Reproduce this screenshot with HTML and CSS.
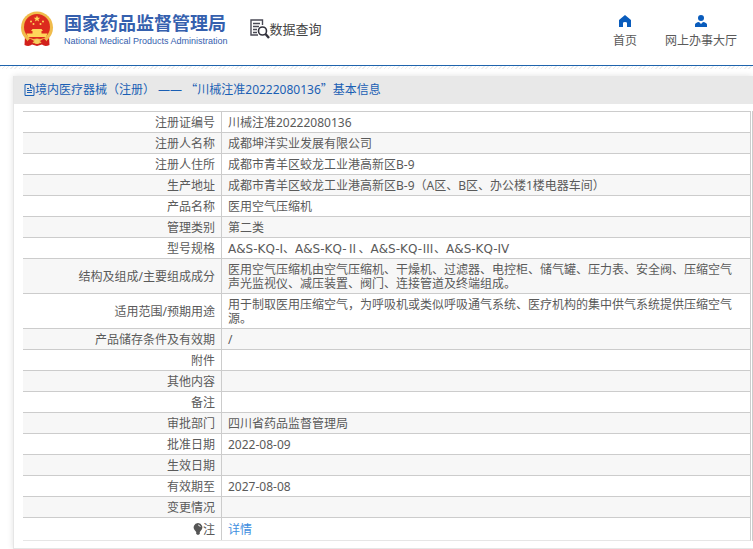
FILE: index.html
```html
<!DOCTYPE html>
<html lang="zh-CN">
<head>
    <meta charset="UTF-8">
    <meta name="viewport" content="width=device-width, initial-scale=1.0">
    <title>国家药品监督管理局 数据查询</title>
    <link rel="stylesheet" href="styles.css">
</head>
<body>
    <header class="header">
        <a class="brand" href="#">
            <svg class="emblem" viewBox="0 0 34 36" aria-hidden="true">
                <path d="M5 25L4.500 34Q9 36 12 33.500L17 35l5-1.500Q25 36 29.500 34L29 25Z" fill="#d2201c"/>
                <circle cx="17" cy="16.500" r="16" fill="#f0bc4c"/>
                <circle cx="17" cy="16" r="13" fill="#dc2a1e"/>
                <path d="M17 4.500l.9 2.200 2.400.1-1.900 1.500.7 2.300-2.100-1.300-2.100 1.300.7-2.300-1.900-1.500 2.400-.1z" fill="#ffd65a"/>
                <g fill="#ffd65a">
                    <circle cx="11" cy="10.500" r="1"/>
                    <circle cx="13.500" cy="13" r="1"/>
                    <circle cx="20.500" cy="13" r="1"/>
                    <circle cx="23" cy="10.500" r="1"/>
                    <path d="M12.500 18h9l1.500 2H11zM12.500 20h9v2.500h-9zM6.500 22.500h21L26 26H8z"/>
                </g>
                <path d="M4 25Q11 29 17 27.500 23 29 30 25l-4 6q-5 1.500-9 0-4 1.500-9 0Z" fill="#f0bc4c"/>
                <path d="M10 27.500l4 2.500-3 3.500-4-3zM24 27.500L20 30l3 3.500 4-3z" fill="#d2201c"/>
                <circle cx="17" cy="30.500" r="2.500" fill="#f6cf62"/>
            </svg>
            <span class="brand-text">
                <strong class="brand-name">国家药品监督管理局</strong>
                <span class="brand-en">National Medical Products Administration</span>
            </span>
        </a>
        <a class="search-link" href="#">
            <svg class="search-icon" viewBox="0 0 20 20" aria-hidden="true">
                <path d="M12.500 6V1H1v15h7M3 4.500h7M3 7.500h6M3 10.500h4M3 13.500h4" fill="none" stroke="#4a4a55" stroke-width="1.400"/>
                <circle cx="12.500" cy="12" r="4" fill="#fff" stroke="#33333d" stroke-width="1.600"/>
                <path d="M15.500 15l3.500 4" stroke="#33333d" stroke-width="2.400"/>
            </svg>
            数据查询
        </a>
        <nav class="nav">
            <a class="nav-item" href="#">
                <svg viewBox="0 0 12 12" aria-hidden="true">
                    <path d="M6 0L0 5v7h4V8q0-1 2-1t2 1v4h4V5z"/>
                </svg>
                首页
            </a>
            <a class="nav-item" href="#">
                <svg viewBox="0 0 12 12" aria-hidden="true">
                    <circle cx="6" cy="3" r="3"/>
                    <path d="M0 12V9.500Q.5 7.500 4 7l2 2 2-2q3.500.5 4 2.500V12z"/>
                </svg>
                网上办事大厅
            </a>
        </nav>
    </header>

    <main class="content">
        <div class="card">
            <h1 class="card-title">
                <svg class="doc-icon" viewBox="0 0 11 12" aria-hidden="true">
                    <path d="M1 .5h6l3 3v8H1zM6.500.5v3.500H10M3 6.500h5M3 8.500h5M3 4.500h2" fill="none" stroke="#1a5fb4"/>
                </svg>
                <span>境内医疗器械（注册） —— <span class="cjk">“</span>川械注准20222080136<span class="cjk">”</span>基本信息</span>
            </h1>
            <div class="table-wrap">
                <table class="info">
                    <tr><th scope="row">注册证编号</th><td>川械注准20222080136</td></tr>
                    <tr><th scope="row">注册人名称</th><td>成都坤洋实业发展有限公司</td></tr>
                    <tr><th scope="row">注册人住所</th><td>成都市青羊区蛟龙工业港高新区B-9</td></tr>
                    <tr><th scope="row">生产地址</th><td>成都市青羊区蛟龙工业港高新区B-9（A区、B区、办公楼1楼电器车间）</td></tr>
                    <tr><th scope="row">产品名称</th><td>医用空气压缩机</td></tr>
                    <tr><th scope="row">管理类别</th><td>第二类</td></tr>
                    <tr><th scope="row">型号规格</th><td class="models">A&amp;S-KQ-I、A&amp;S-KQ-<span class="cjk">Ⅱ</span>、A&amp;S-KQ-<span class="cjk">Ⅲ</span>、A&amp;S-KQ-IV</td></tr>
                    <tr><th scope="row">结构及组成/主要组成成分</th><td>医用空气压缩机由空气压缩机、干燥机、过滤器、电控柜、储气罐、压力表、安全阀、压缩空气声光监视仪、减压装置、阀门、连接管道及终端组成。</td></tr>
                    <tr><th scope="row">适用范围/预期用途</th><td>用于制取医用压缩空气，为呼吸机或类似呼吸通气系统、医疗机构的集中供气系统提供压缩空气源。</td></tr>
                    <tr><th scope="row">产品储存条件及有效期</th><td>/</td></tr>
                    <tr><th scope="row">附件</th><td></td></tr>
                    <tr><th scope="row">其他内容</th><td></td></tr>
                    <tr><th scope="row">备注</th><td></td></tr>
                    <tr><th scope="row">审批部门</th><td>四川省药品监督管理局</td></tr>
                    <tr><th scope="row">批准日期</th><td>2022-08-09</td></tr>
                    <tr><th scope="row">生效日期</th><td></td></tr>
                    <tr><th scope="row">有效期至</th><td>2027-08-08</td></tr>
                    <tr><th scope="row">变更情况</th><td></td></tr>
                    <tr class="note">
                        <th scope="row">
                            <svg class="bulb" viewBox="0 0 10 12" aria-hidden="true">
                                <path d="M5 0a4.300 4.300 0 0 1 3 7.400L6.800 9v2L5 12l-1.800-1V9L2 7.400A4.300 4.300 0 0 1 5 0z" fill="#555"/>
                                <path d="M5 2q2 0 2.300 2" fill="none" stroke="#fff" stroke-width=".8"/>
                            </svg>注</th>
                        <td><a href="#">详情</a></td>
                    </tr>
                </table>
            </div>
        </div>
    </main>
</body>
</html>
```
FILE: styles.css
```css
* {
    box-sizing: border-box;
}
body {
    margin: 0;
    font: 12px/14px "Noto Sans", "Noto Sans CJK SC", sans-serif;
    color: #5a5a5a;
    background: #fff;
}
a {
    text-decoration: none;
    color: inherit;
}
svg {
    display: block;
    flex: none;
}

/* Header */
.header {
    display: flex;
    align-items: center;
    height: 66px;
    padding: 0 16px 8px 20px;
    border-bottom: 1px solid #1f64ad;
}
.brand {
    display: flex;
    align-items: center;
    gap: 10px;
    color: #3560ae;
}
.emblem {
    width: 34px;
    height: 36px;
}
.brand-text {
    display: flex;
    flex-direction: column;
}
.brand-name {
    font-size: 18px;
    line-height: 24px;
}
.brand-en {
    font: 9px/12px "Liberation Sans", Arial, sans-serif;
}
.search-link {
    display: flex;
    align-items: center;
    margin-left: 22px;
    font-size: 13px;
    color: #444;
}
.search-icon {
    width: 20px;
    height: 20px;
}
.nav {
    display: flex;
    gap: 28px;
    margin-left: auto;
    padding-top: 6px;
}
.nav-item {
    display: flex;
    flex-direction: column;
    align-items: center;
    gap: 7px;
}
.nav-item svg {
    width: 12px;
    height: 12px;
    fill: #0a5cbc;
}

/* Info card */
.content {
    padding: 10px 0 0 13px;
    background: repeating-linear-gradient(135deg, #eee 0 1px, #fff 1px 3px) 0 0 / 100% 3px no-repeat;
}
.card {
    padding-bottom: 7px;
    border: solid #e6e6e6;
    border-width: 0 0 1px 1px;
    box-shadow: 0 0 6px rgba(0, 0, 0, 0.12);
}
.card-title {
    display: flex;
    align-items: center;
    height: 28px;
    margin: 0;
    padding-left: 10px;
    background: #e8e8e8;
    color: #1a5fb4;
    font-size: 12px;
    font-weight: normal;
}
.doc-icon {
    width: 11px;
    height: 12px;
}
.cjk {
    font-family: "Noto Sans CJK SC", sans-serif;
    line-height: 0;
}
.table-wrap {
    margin: 7px 0 0 9px;
    padding-right: 1px;
    border-right: 1px solid #ccc;
}
.info {
    width: 100%;
    border-collapse: separate;
    border-spacing: 0;
    border-right: 1px solid #ccc;
    border-bottom: 1px solid #e6e6e6;
}
.info th,
.info td {
    height: 21px;
    padding: 4px 6px 2px;
    border-top: 1px solid #ccc;
    font-weight: normal;
}
.info th {
    width: 199px;
    text-align: right;
    border-right: 1px solid #ccc;
}
.info td {
    padding-right: 14px;
    text-align: left;
}
.info .models {
    font-family: "DejaVu Sans", "Noto Sans CJK SC", sans-serif;
}
.info tr:nth-child(even) {
    background: #f7f7f7;
}
.info .note td,
.info .note th {
    height: 23px;
}
.bulb {
    display: inline-block;
    width: 10px;
    height: 12px;
    vertical-align: -1px;
}
.note a {
    color: #3e8ee0;
}
```
